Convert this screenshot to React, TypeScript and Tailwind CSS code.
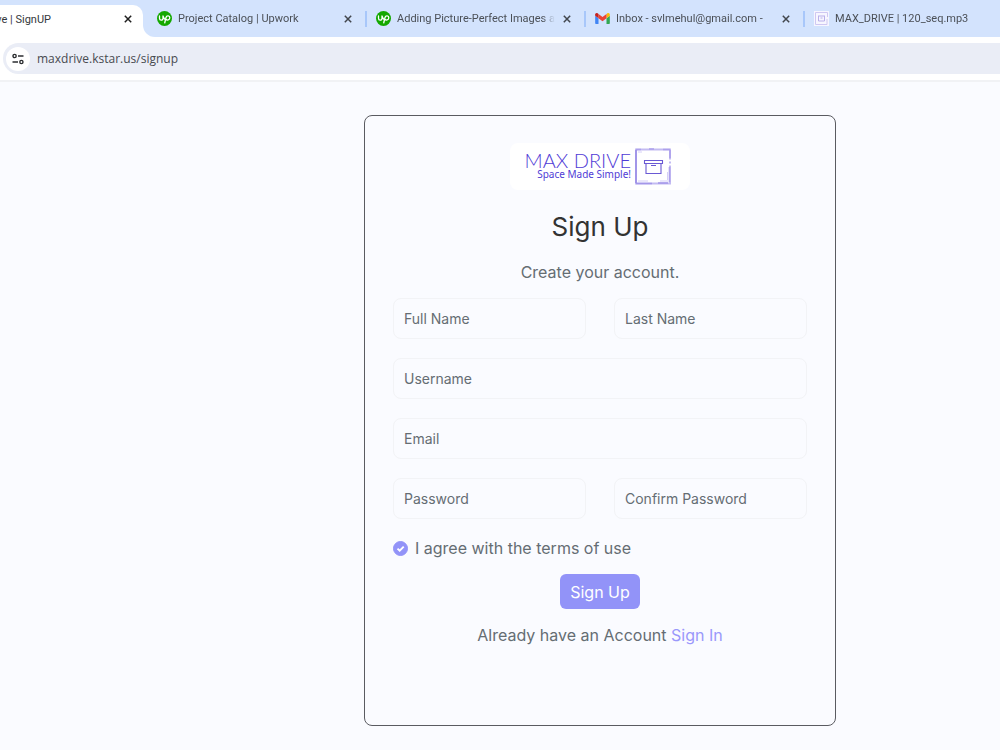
import type { ReactNode } from 'react';
import { clsx } from 'clsx';

interface BrowserTab {
  title: string;
  icon: ReactNode;
  closable: boolean;
}

function UpworkIcon() {
  return (
    <svg viewBox="0 0 30 30" className="w-[15px] h-[15px] shrink-0" aria-hidden="true">
      <circle cx="15" cy="15" r="15" fill="#14a800" />
      <path
        d="M5 10v4.500c0 5 7 5 7 0V10c1 4 3 6.500 5.500 8M15.500 23.500l2.500-10.500c1.400-4.800 7.600-4 7.600.6 0 5-5.600 5.800-8.600 2.400"
        fill="none"
        stroke="#fff"
        strokeWidth="2.600"
        strokeLinecap="round"
        strokeLinejoin="round"
      />
    </svg>
  );
}

function GmailIcon() {
  return (
    <svg viewBox="52 42 88 66" className="w-[15px] h-[11px] shrink-0" aria-hidden="true">
      <path fill="#4285f4" d="M58 108h14V74L52 59v43c0 3.320 2.690 6 6 6" />
      <path fill="#34a853" d="M120 108h14c3.320 0 6-2.690 6-6V59l-20 15" />
      <path fill="#fbbc04" d="M120 48v26l20-15v-8c0-7.420-8.470-11.650-14.400-7.200" />
      <path fill="#ea4335" d="M72 74V48l24 18 24-18v26L96 92" />
      <path fill="#c5221f" d="M52 51v8l20 15V48l-5.600-4.200c-5.940-4.450-14.400-.22-14.400 7.200" />
    </svg>
  );
}

function DriveIcon() {
  return (
    <svg viewBox="0 0 15 15" className="w-[15px] h-[15px] shrink-0" aria-hidden="true">
      <rect width="15" height="15" fill="#f7f6ff" />
      <path d="M13 8v5.500H1.500v-12h12V6" fill="none" stroke="#cfc8f2" />
      <path d="M4 5h7M4.500 5v5h6V5M6.500 7h2" fill="none" stroke="#b9b0ea" />
    </svg>
  );
}

function CloseIcon({ dark = false }: { dark?: boolean }) {
  return (
    <svg viewBox="0 0 8 8" className="w-2 h-2" aria-hidden="true">
      <path d="M.8.8l6.400 6.400M7.200.8L.8 7.200" stroke={dark ? '#1f1f1f' : '#41464d'} strokeWidth="1.500" />
    </svg>
  );
}

const tabs: BrowserTab[] = [
  { title: 'Project Catalog | Upwork', icon: <UpworkIcon />, closable: true },
  { title: 'Adding Picture-Perfect Images a', icon: <UpworkIcon />, closable: true },
  { title: 'Inbox - svlmehul@gmail.com - ', icon: <GmailIcon />, closable: true },
  { title: 'MAX_DRIVE | 120_seq.mp3', icon: <DriveIcon />, closable: false },
];

function TabStrip() {
  return (
    <div className="flex h-[37px] overflow-hidden font-['Roboto',sans-serif] text-[11px]">
      <div className="bg-[#d3e3fd] pt-[5px] shrink-0">
        <div className="flex items-center justify-between w-[143px] h-8 pr-[11px] pb-1 bg-white rounded-tr-[10px]">
          <span className="flex justify-end w-[51px] pt-0.5 text-[#35383c] whitespace-nowrap">ve | SignUP</span>
          <button type="button" aria-label="Close tab" className="flex">
            <CloseIcon dark />
          </button>
        </div>
      </div>
      <div className="flex flex-1 min-w-0 items-center pl-[5px] bg-[#d3e3fd] rounded-bl-[12px] overflow-hidden">
        {tabs.map((tab) => (
          <div
            key={tab.title}
            className={clsx(
              'flex items-center shrink-0 w-[219px] h-4 pl-[9px]',
              tab.closable && 'border-r-2 border-[#a8c7fa]'
            )}
          >
            {tab.icon}
            <span className="flex-1 min-w-0 ml-1.5 pt-0.5 overflow-hidden whitespace-nowrap text-[#4b5057] [mask-image:linear-gradient(to_right,black_92%,transparent)]">
              {tab.title}
            </span>
            {tab.closable && (
              <button type="button" aria-label={`Close ${tab.title}`} className="flex ml-2 mr-[13px]">
                <CloseIcon />
              </button>
            )}
          </div>
        ))}
      </div>
    </div>
  );
}

function AddressBar() {
  return (
    <div className="pt-1.5 pb-1.5 pl-[3px] border-b-2 border-[#f1f2f5]">
      <div className="flex items-center h-[31px] pl-[3px] bg-[#eaedf6] rounded-l-full">
        <button
          type="button"
          aria-label="View site information"
          className="flex items-center justify-center w-6 h-6 bg-white rounded-full"
        >
          <svg viewBox="0 0 12 12" className="w-3 h-3" fill="none" stroke="#2b2d30" strokeWidth="1.400" aria-hidden="true">
            <circle cx="2.600" cy="3" r="1.600" />
            <path d="M6 3h5.500M.5 9H6" />
            <circle cx="9.400" cy="9" r="1.600" />
          </svg>
        </button>
        <input
          type="text"
          aria-label="Address"
          defaultValue="maxdrive.kstar.us/signup"
          className="flex-1 min-w-0 ml-[7px] bg-transparent text-[12px] text-[#474a50] outline-none"
        />
      </div>
    </div>
  );
}

function Logo() {
  return (
    <div className="flex items-center w-[180px] h-[47px] pl-[19px] gap-1 bg-white rounded-lg text-[#4f3bd6]">
      <div className="flex flex-col items-end w-[102px] pb-1 whitespace-nowrap">
        <span className="font-['Lato',sans-serif] font-light text-[20px] leading-[18px]">MAX DRIVE</span>
        <span className="font-['Noto_Sans',sans-serif] text-[10px] leading-[10px]">Space Made Simple!</span>
      </div>
      <svg viewBox="0 0 36 37" className="w-9 h-[37px]" fill="none" aria-hidden="true">
        <path d="M1 1.500h34v34H1z" stroke="#c3bbf2" strokeWidth="2" />
        <path d="M1 1.500h5M14 1h5M28 1.500h7M35 2v8M34.500 19v15" stroke="#ada1ec" strokeWidth="1.600" />
        <path d="M1 2v33" stroke="#8c7ee2" strokeWidth="1.200" />
        <path d="M1 35.500h16M23 35h10" stroke="#a497e9" strokeWidth="1.600" />
        <path d="M34 12.500h2M34 16.500h2" stroke="#fff" strokeWidth="2" />
        <path d="M3 33h10M25 33h8M3 4h4M32.500 24v8" stroke="#d6d0f7" />
        <path d="M9.500 12.500h18v3h-18zM11 15.500v10h15v-10M16 17.500h5" stroke="#6a59d4" strokeWidth="1.100" />
      </svg>
    </div>
  );
}

interface FieldProps {
  id: string;
  label: string;
  type?: string;
  wide?: boolean;
}

// The label sits inside the box and goes away once something is typed
function Field({ id, label, type = 'text', wide = false }: FieldProps) {
  return (
    <div className={clsx('grid items-center min-w-0', wide && 'col-span-2')}>
      <input
        id={id}
        type={type}
        placeholder=" "
        className="peer col-start-1 row-start-1 w-full h-[41px] px-2.5 text-[14px] text-[#333] bg-transparent border border-[#f2f3f6] rounded-lg outline-none"
      />
      <label
        htmlFor={id}
        className="col-start-1 row-start-1 justify-self-start pl-[11px] text-[14px] leading-5 text-[#656d73] cursor-text invisible peer-placeholder-shown:visible"
      >
        {label}
      </label>
    </div>
  );
}

export default function App() {
  return (
    <div className="min-h-screen bg-[#fafbff]">
      <header className="bg-white font-['Open_Sans',sans-serif]">
        <TabStrip />
        <AddressBar />
      </header>

      <main className="flex justify-center pl-[200px] pt-[33px] pb-6 font-['Inter',sans-serif] text-[#656d73]">
        <section className="flex flex-col items-center w-full max-w-[472px] px-7 pt-[27px] pb-[78px] border border-[#5a5b61] rounded-lg">
          <Logo />
          <h1 className="mt-[19px] text-[26px] leading-9 text-[#333]">Sign Up</h1>
          <p className="mt-[15px] text-base">Create your account.</p>

          <form className="flex flex-col items-center w-full mt-3.5" onSubmit={(e) => e.preventDefault()}>
            <div className="grid grid-cols-2 gap-x-7 gap-y-[19px] w-full">
              <Field id="first-name" label="Full Name" />
              <Field id="last-name" label="Last Name" />
              <Field id="username" label="Username" wide />
              <Field id="email" label="Email" type="email" wide />
              <Field id="password" label="Password" type="password" />
              <Field id="confirm-password" label="Confirm Password" type="password" />
            </div>

            <label className="flex items-center self-start gap-[7px] mt-[17px] text-base">
              <span className="grid w-[15px] h-[15px]">
                <input
                  type="checkbox"
                  defaultChecked
                  className="peer appearance-none col-start-1 row-start-1 w-[15px] h-[15px] border border-[#9293f8] rounded-full checked:bg-[#9293f8]"
                />
                <svg
                  viewBox="0 0 15 15"
                  className="col-start-1 row-start-1 w-[15px] h-[15px] pointer-events-none invisible peer-checked:visible"
                  aria-hidden="true"
                >
                  <path d="M4.500 7.600l2.200 2.100 4-4.100" fill="none" stroke="#fff" strokeWidth="1.900" />
                </svg>
              </span>
              I agree with the terms of use
            </label>

            <button type="submit" className="mt-3.5 w-20 h-[35px] bg-[#9293f8] rounded-md text-base text-white">
              Sign Up
            </button>
          </form>

          <p className="mt-3.5 text-base">
            Already have an Account{' '}
            <a href="#signin" className="text-[#9a98fb]">
              Sign In
            </a>
          </p>
        </section>
      </main>
    </div>
  );
}
